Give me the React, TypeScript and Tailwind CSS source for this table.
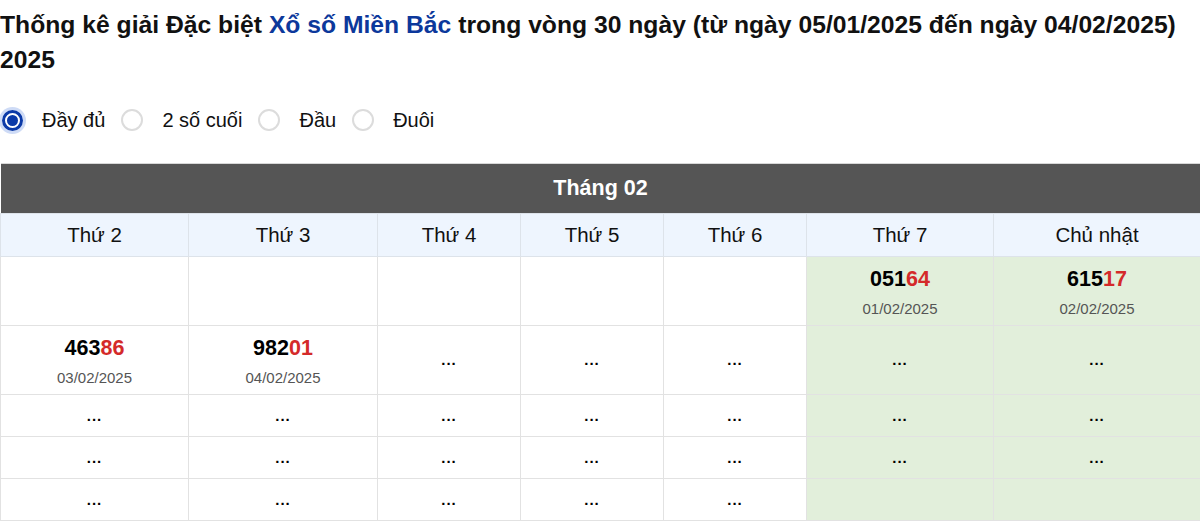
import React from 'react';

const font = { fontFamily: '"Liberation Sans", Arial, sans-serif' };

type Cell = { num?: string; date?: string; dots?: boolean } | null;

const days = ['Thứ 2', 'Thứ 3', 'Thứ 4', 'Thứ 5', 'Thứ 6', 'Thứ 7', 'Chủ nhật'];

const D = { dots: true };
const rows: Cell[][] = [
  [null, null, null, null, null, { num: '05164', date: '01/02/2025' }, { num: '61517', date: '02/02/2025' }],
  [{ num: '46386', date: '03/02/2025' }, { num: '98201', date: '04/02/2025' }, D, D, D, D, D],
  [D, D, D, D, D, D, D],
  [D, D, D, D, D, D, D],
  [D, D, D, D, D, null, null],
];

function Radio({ label, checked }: { label: string; checked?: boolean }) {
  return (
    <label className="flex items-center gap-[19px]">
      {checked ? (
        <span className="w-[21px] h-[21px] rounded-full border-[3px] border-[#0b3aa8] flex items-center justify-center shadow-[0_0_0_3px_rgba(59,110,220,0.25)]">
          <span className="w-[11px] h-[11px] rounded-full bg-[#0b3aa8]" />
        </span>
      ) : (
        <span className="w-[22px] h-[22px] rounded-full border-2 border-[#dcdcdc] bg-white" />
      )}
      <span className="text-[20px] text-[#111]">{label}</span>
    </label>
  );
}

export default function App() {
  return (
    <div className="w-[1200px] h-[522px] bg-white overflow-hidden" style={font}>
      <h1 className="pt-[7px] text-[24.7px] leading-[35px] font-bold text-[#111]">
        Thống kê giải Đặc biệt <span className="text-[#0c389b]">Xổ số Miền Bắc</span> trong vòng 30 ngày (từ ngày 05/01/2025 đến ngày 04/02/2025) 2025
      </h1>

      <div className="flex items-center gap-[16px] pl-[2px] mt-[28px] h-[30px]">
        <Radio label="Đầy đủ" checked />
        <Radio label="2 số cuối" />
        <Radio label="Đầu" />
        <Radio label="Đuôi" />
      </div>

      <table className="mt-[28px] w-full border-collapse border-t border-[#d8d8d8] table-fixed">
        <colgroup>
          <col className="w-[188px]" />
          <col className="w-[189px]" />
          <col className="w-[143px]" />
          <col className="w-[143px]" />
          <col className="w-[143px]" />
          <col className="w-[187px]" />
          <col className="w-[207px]" />
        </colgroup>
        <thead>
          <tr>
            <th colSpan={7} className="h-[50px] bg-[#555555] text-white text-[21.5px] font-bold">
              Tháng 02
            </th>
          </tr>
          <tr>
            {days.map((d) => (
              <th
                key={d}
                className="h-[43px] bg-[#eef5fe] border border-[#dde3ea] text-[20.5px] font-normal text-[#111]"
              >
                {d}
              </th>
            ))}
          </tr>
        </thead>
        <tbody>
          {rows.map((row, r) => (
            <tr key={r} className={r < 2 ? 'h-[69px]' : 'h-[42px]'}>
              {row.map((c, i) => (
                <td
                  key={i}
                  className={`border border-[#e2e2e2] text-center ${c && c.num ? 'align-top' : 'align-middle'} ${i >= 5 ? 'bg-[#e2efdb]' : 'bg-white'}`}
                >
                  {c && c.num && (
                    <div className="flex flex-col items-center pt-[10px]">
                      <div className="text-[21.5px] font-bold leading-[24px] text-black">
                        {c.num.slice(0, 3)}
                        <span className="text-[#d42a2a]">{c.num.slice(3)}</span>
                      </div>
                      <div className="text-[15px] leading-[18px] mt-[9px] text-[#555]">{c.date}</div>
                    </div>
                  )}
                  {c && c.dots && <span className="text-[15px] font-bold tracking-[1px] text-black">...</span>}
                </td>
              ))}
            </tr>
          ))}
        </tbody>
      </table>
    </div>
  );
}
